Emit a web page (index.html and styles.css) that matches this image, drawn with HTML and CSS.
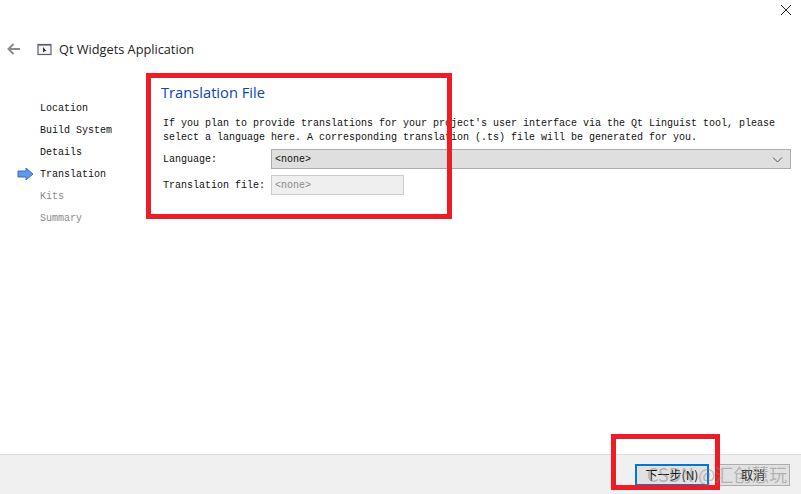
FILE: index.html
```html
<!DOCTYPE html>
<html lang="en">
<head>
<meta charset="utf-8">
<title>Qt Widgets Application</title>
<link rel="stylesheet" href="styles.css">
</head>
<body>
<div class="window">
  <div class="titlebar">
    <svg class="close" width="12" height="12" viewBox="0 0 12 12"><path d="M1 1 L11 11 M11 1 L1 11" stroke="#222" stroke-width="1" fill="none"/></svg>
  </div>
  <header class="head">
    <svg class="back" width="14" height="12" viewBox="0 0 14 12"><path d="M6.5 1 L1.5 6 L6.5 11 M1.5 6 H13" stroke="#8a8a8a" stroke-width="2" fill="none"/></svg>
    <svg class="appicon" width="15" height="13" viewBox="0 0 15 13"><rect x="1" y="1.5" width="13" height="10" fill="#f4f4f6" stroke="#5b5f6b" stroke-width="1.2"/><rect x="1" y="1" width="13" height="1.6" fill="#5b5f6b"/><path d="M6 4 L6 9.5 L7.5 8.2 L9.4 8 Z" fill="#333"/></svg>
    <span class="apptitle">Qt Widgets Application</span>
  </header>
  <div class="main">
    <nav class="steps">
      <div class="step">Location</div>
      <div class="step">Build System</div>
      <div class="step">Details</div>
      <div class="step current">
        <svg class="marker" width="17" height="14" viewBox="0 0 17 14"><path d="M1 4 H9 V1 L16 7 L9 13 V10 H1 Z" fill="#5b9bea" stroke="#3f6fb0" stroke-width="1"/></svg>
        Translation
      </div>
      <div class="step dim">Kits</div>
      <div class="step dim">Summary</div>
    </nav>
    <section class="content">
      <h1 class="heading">Translation File</h1>
      <p class="intro">If you plan to provide translations for your project's user interface via the Qt Linguist tool, please<br>select a language here. A corresponding translation (.ts) file will be generated for you.</p>
      <div class="row">
        <span class="label">Language:</span>
        <div class="combo"><span>&lt;none&gt;</span>
          <svg width="11" height="6" viewBox="0 0 11 6"><path d="M1 0.5 L5.5 5 L10 0.5" stroke="#555" fill="none"/></svg>
        </div>
      </div>
      <div class="row second">
        <span class="label">Translation file:</span>
        <div class="field">&lt;none&gt;</div>
      </div>
    </section>
  </div>
  <footer class="foot">
    <button class="btn primary">下一步(N)</button>
    <button class="btn">取消</button>
  </footer>
  <div class="mark mark-a"></div>
  <div class="mark mark-b"></div>
  <div class="watermark">CSDN @汇创慧玩</div>
</div>
</body>
</html>
```
FILE: styles.css
```css
* { box-sizing: border-box; }
html, body { margin: 0; padding: 0; }
body { background: #fff; font-family: "Liberation Mono", "Noto Sans CJK SC", monospace; font-size: 10px; color: #111; }
.window { position: relative; width: 801px; height: 494px; display: flex; flex-direction: column; overflow: hidden; }
.titlebar { height: 34px; display: flex; justify-content: flex-end; padding: 4px 9px 0 0; }
.close { display: block; }
.head { height: 30px; display: flex; align-items: center; padding-left: 7px; }
.back { margin-right: 16px; }
.appicon { margin-right: 7px; }
.apptitle { font-family: "Open Sans", sans-serif; font-size: 12.75px; color: #222; }
.main { flex: 1; display: flex; }
.steps { width: 161px; padding: 34px 0 0 40px; }
.step { height: 22px; line-height: 22px; position: relative; }
.step.dim { color: #8a8a8a; }
.marker { position: absolute; left: -23px; top: 3px; }
.content { flex: 1; padding-right: 10px; }
.heading { margin: 18px 0 0; font-family: "Open Sans", sans-serif; font-weight: 400; font-size: 14.7px; line-height: 20px; color: #0a46b4; }
.intro { margin: 15px 0 0 2px; line-height: 14px; white-space: nowrap; }
.row { display: flex; align-items: center; margin: 4px 0 0 2px; height: 20px; }
.row.second { margin-top: 6px; }
.label { width: 108px; padding-top: 1px; }
.combo { flex: 1; height: 20px; background: #dfdfdf; border: 1px solid #adadad; display: flex; align-items: center; justify-content: space-between; padding: 1px 7px 0 3px; }
.field { width: 133px; height: 20px; background: #efefef; border: 1px solid #ccc; color: #8a8a8a; line-height: 19px; padding-left: 3px; }
.foot { height: 40px; background: #f0f0f0; border-top: 1px solid #dfdfdf; display: flex; justify-content: flex-end; gap: 7px; padding: 9px 11px 0 0; }
.btn { width: 74px; height: 22px; padding: 0; background: #e1e1e1; border: 1px solid #adadad; font-family: "Noto Sans CJK SC", sans-serif; font-size: 12px; line-height: 18px; color: #111; }
.btn.primary { border: 2px solid #0078d7; }
.mark { position: absolute; border: 5px solid #ee1c25; }
.mark-a { left: 146px; top: 73px; width: 306px; height: 146px; }
.mark-b { left: 611px; top: 434px; width: 109px; height: 56px; }
.watermark { position: absolute; left: 647px; top: 462px; font-family: "Noto Sans CJK SC", sans-serif; font-size: 18px; line-height: 24px; color: rgba(130,130,130,0.5); white-space: nowrap; }
```
